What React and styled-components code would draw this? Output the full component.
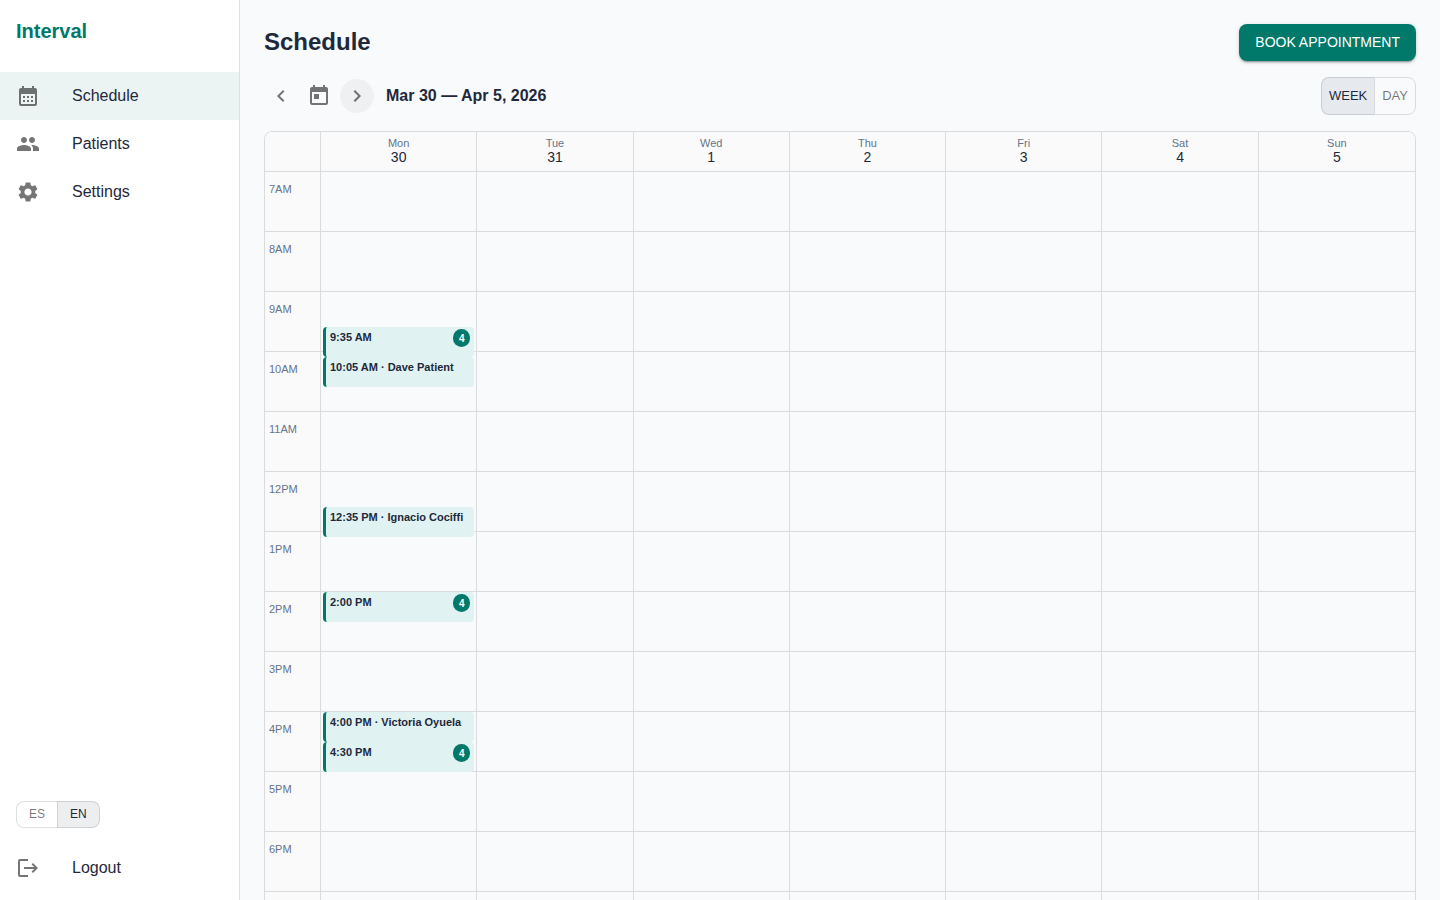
import React, { useState } from "react";
import styled, { createGlobalStyle, css } from "styled-components";
import {
  MdCalendarMonth,
  MdChevronLeft,
  MdChevronRight,
  MdLogout,
  MdPeople,
  MdSettings,
  MdToday,
} from "react-icons/md";

const color = {
  primary: "#00796b",
  text: "#1e293b",
  muted: "#64748b",
  icon: "rgba(0, 0, 0, 0.54)",
  line: "rgba(0, 0, 0, 0.12)",
  gridLine: "#d9dbdd",
  page: "#f8fafc",
  header: "#fafafa",
  event: "#e0f2f1",
};

const GlobalStyle = createGlobalStyle`
  *, *::before, *::after { box-sizing: border-box; }
  body {
    margin: 0;
    background: ${color.page};
    color: ${color.text};
    font-family: "Liberation Sans", Helvetica, Arial, sans-serif;
    font-size: 16px;
    line-height: 24px;
  }
  button { font-family: inherit; cursor: pointer; }
`;

const Shell = styled.div`
  display: flex;
  height: 100vh;
`;

const Sidebar = styled.aside`
  display: flex;
  flex-direction: column;
  flex: none;
  width: 240px;
  padding-bottom: 8px;
  background: #fff;
  border-right: 1px solid ${color.line};
`;

const Brand = styled.div`
  padding: 16px 16px 26px;
  color: ${color.primary};
  font-size: 20px;
  font-weight: 700;
  line-height: 30px;
`;

const NavList = styled.nav`
  display: flex;
  flex-direction: column;
`;

const navItem = css`
  display: flex;
  align-items: center;
  gap: 32px;
  width: 100%;
  height: 48px;
  padding: 0 16px;
  border: 0;
  background: ${(p) => (p.$active ? "rgba(0, 121, 107, 0.08)" : "transparent")};
  color: ${color.text};
  font-size: 16px;
  text-decoration: none;

  svg {
    width: 24px;
    height: 24px;
    color: ${color.icon};
  }
`;

const NavLink = styled.a`
  ${navItem}
`;

const LogoutButton = styled.button`
  ${navItem}
`;

const SidebarFooter = styled.div`
  display: flex;
  flex-direction: column;
  align-items: flex-start;
  gap: 16px;
  margin-top: auto;
`;

const ToggleGroup = styled.div`
  display: flex;
  margin-left: ${(p) => (p.$inset ? "16px" : "0")};
`;

const ToggleButton = styled.button`
  height: ${(p) => (p.$small ? "27px" : "38px")};
  padding: 0 ${(p) => (p.$small ? "12px" : "7px")} 2px;
  border: 1px solid ${color.line};
  background: ${(p) => (p.$selected ? "rgba(30, 41, 59, 0.08)" : "transparent")};
  color: ${(p) => (p.$selected ? color.text : color.icon)};
  font-size: ${(p) => (p.$small ? "12px" : "13px")};
  text-transform: uppercase;

  &:first-child { border-radius: 8px 0 0 8px; border-right: 0; }
  &:last-child { border-radius: 0 8px 8px 0; }
`;

const Main = styled.main`
  flex: 1;
  min-width: 0;
  padding: 24px;
  overflow-y: auto;
  scrollbar-width: none;
`;

const PageHeader = styled.header`
  display: flex;
  align-items: flex-start;
  justify-content: space-between;
  margin-bottom: 16px;
`;

const PageTitle = styled.h1`
  margin: 0;
  font-size: 24px;
  font-weight: 700;
  line-height: 36px;
`;

const PrimaryButton = styled.button`
  height: 37px;
  padding: 0 16px 2px;
  border: 0;
  border-radius: 8px;
  background: ${color.primary};
  color: #fff;
  font-size: 14px;
  text-transform: uppercase;
  box-shadow: 0 3px 1px -2px rgba(0, 0, 0, 0.2), 0 2px 2px rgba(0, 0, 0, 0.14),
    0 1px 5px rgba(0, 0, 0, 0.12);
`;

const Toolbar = styled.div`
  display: flex;
  align-items: center;
  gap: 4px;
  margin-bottom: 16px;
`;

const IconButton = styled.button`
  display: flex;
  padding: 5px;
  border: 0;
  border-radius: 50%;
  background: ${(p) => (p.$highlighted ? "rgba(0, 0, 0, 0.04)" : "transparent")};
  color: ${color.icon};

  svg {
    width: 24px;
    height: 24px;
  }
`;

const RangeTitle = styled.h2`
  flex: 1;
  margin: 0 0 0 8px;
  font-size: 16px;
  font-weight: 700;
`;

const CalendarFrame = styled.div`
  overflow: hidden;
  border: 1px solid ${color.gridLine};
  border-radius: 8px;
`;

const CalendarTable = styled.table`
  width: 100%;
  table-layout: fixed;
  border-collapse: separate;
  border-spacing: 0;
`;

const HeadCell = styled.th`
  width: ${(p) => (p.$gutter ? "56px" : "auto")};
  height: 40px;
  padding: 4px 0 7px;
  background: ${color.header};
  border-right: 1px solid ${color.gridLine};
  border-bottom: 1px solid ${color.gridLine};
  font-weight: 400;
  vertical-align: top;

  &:last-child { border-right: 0; }
`;

const DayName = styled.div`
  color: ${color.muted};
  font-size: 11px;
  line-height: 14px;
`;

const DayNumber = styled.div`
  font-size: 14px;
  line-height: 14px;
`;

const HourLabel = styled.th`
  height: 60px;
  padding: 10px 4px 0;
  background: ${color.header};
  border-right: 1px solid ${color.gridLine};
  border-bottom: 1px solid ${color.gridLine};
  color: ${color.muted};
  font-size: 11px;
  font-weight: 400;
  line-height: 14px;
  text-align: left;
  vertical-align: top;
`;

const Slot = styled.td`
  position: relative;
  padding: 0;
  border-right: 1px solid ${color.gridLine};
  border-bottom: 1px solid ${color.gridLine};

  &:last-child { border-right: 0; }
`;

const Appointment = styled.button`
  position: absolute;
  left: 2px;
  right: 2px;
  display: flex;
  align-items: flex-start;
  justify-content: space-between;
  height: 30px;
  padding: 2px 4px;
  border: 0;
  border-left: 3px solid ${color.primary};
  border-radius: 4px;
  background: ${color.event};
  color: ${color.text};
  font-size: 11px;
  font-weight: 700;
  line-height: 17px;
  text-align: left;
  white-space: nowrap;
`;

const CountBadge = styled.span`
  width: 17px;
  height: 18px;
  padding-top: 1px;
  border-radius: 9px;
  background: ${color.primary};
  color: #fff;
  font-size: 10px;
  line-height: 18px;
  text-align: center;
`;

const NAV = [
  { label: "Schedule", Icon: MdCalendarMonth },
  { label: "Patients", Icon: MdPeople },
  { label: "Settings", Icon: MdSettings },
];

const DAYS = [
  ["Mon", 30],
  ["Tue", 31],
  ["Wed", 1],
  ["Thu", 2],
  ["Fri", 3],
  ["Sat", 4],
  ["Sun", 5],
];

const HOURS = [7, 8, 9, 10, 11, 12, 13, 14, 15, 16, 17, 18, 19, 20];

const APPOINTMENTS = [
  { day: 30, hour: 9, minute: 35, title: "9:35 AM", count: 4 },
  { day: 30, hour: 10, minute: 5, title: "10:05 AM · Dave Patient" },
  { day: 30, hour: 12, minute: 35, title: "12:35 PM · Ignacio Cociffi" },
  { day: 30, hour: 14, minute: 0, title: "2:00 PM", count: 4 },
  { day: 30, hour: 16, minute: 0, title: "4:00 PM · Victoria Oyuela" },
  { day: 30, hour: 16, minute: 30, title: "4:30 PM", count: 4 },
];

const hourText = (hour) => `${hour > 12 ? hour - 12 : hour}${hour < 12 ? "AM" : "PM"}`;

function Toggle({ label, options, initial, small, inset }) {
  const [value, setValue] = useState(initial);
  return (
    <ToggleGroup role="group" aria-label={label} $inset={inset}>
      {options.map((option) => (
        <ToggleButton
          key={option}
          type="button"
          aria-pressed={option === value}
          $selected={option === value}
          $small={small}
          onClick={() => setValue(option)}
        >
          {option}
        </ToggleButton>
      ))}
    </ToggleGroup>
  );
}

function Calendar() {
  return (
    <CalendarFrame>
      <CalendarTable>
        <thead>
          <tr>
            <HeadCell $gutter aria-label="Time" />
            {DAYS.map(([name, number]) => (
              <HeadCell key={name} scope="col">
                <DayName>{name}</DayName>
                <DayNumber>{number}</DayNumber>
              </HeadCell>
            ))}
          </tr>
        </thead>
        <tbody>
          {HOURS.map((hour) => (
            <tr key={hour}>
              <HourLabel scope="row">{hourText(hour)}</HourLabel>
              {DAYS.map(([name, number]) => (
                <Slot key={name}>
                  {APPOINTMENTS.filter((a) => a.day === number && a.hour === hour).map((a) => (
                    <Appointment key={a.minute} type="button" style={{ top: a.minute }}>
                      <span>{a.title}</span>
                      {a.count && <CountBadge>{a.count}</CountBadge>}
                    </Appointment>
                  ))}
                </Slot>
              ))}
            </tr>
          ))}
        </tbody>
      </CalendarTable>
    </CalendarFrame>
  );
}

export default function App() {
  return (
    <>
      <GlobalStyle />
      <Shell>
        <Sidebar>
          <Brand>Interval</Brand>
          <NavList aria-label="Main">
            {NAV.map(({ label, Icon }, index) => (
              <NavLink
                key={label}
                href={`#${label.toLowerCase()}`}
                aria-current={index === 0 ? "page" : undefined}
                $active={index === 0}
              >
                <Icon aria-hidden="true" />
                {label}
              </NavLink>
            ))}
          </NavList>
          <SidebarFooter>
            <Toggle label="Language" options={["ES", "EN"]} initial="EN" small inset />
            <LogoutButton type="button">
              <MdLogout aria-hidden="true" />
              Logout
            </LogoutButton>
          </SidebarFooter>
        </Sidebar>
        <Main>
          <PageHeader>
            <PageTitle>Schedule</PageTitle>
            <PrimaryButton type="button">Book appointment</PrimaryButton>
          </PageHeader>
          <Toolbar>
            <IconButton type="button" aria-label="Previous week">
              <MdChevronLeft />
            </IconButton>
            <IconButton type="button" aria-label="Today">
              <MdToday />
            </IconButton>
            <IconButton type="button" aria-label="Next week" $highlighted>
              <MdChevronRight />
            </IconButton>
            <RangeTitle>Mar 30 — Apr 5, 2026</RangeTitle>
            <Toggle label="View" options={["Week", "Day"]} initial="Week" />
          </Toolbar>
          <Calendar />
        </Main>
      </Shell>
    </>
  );
}
